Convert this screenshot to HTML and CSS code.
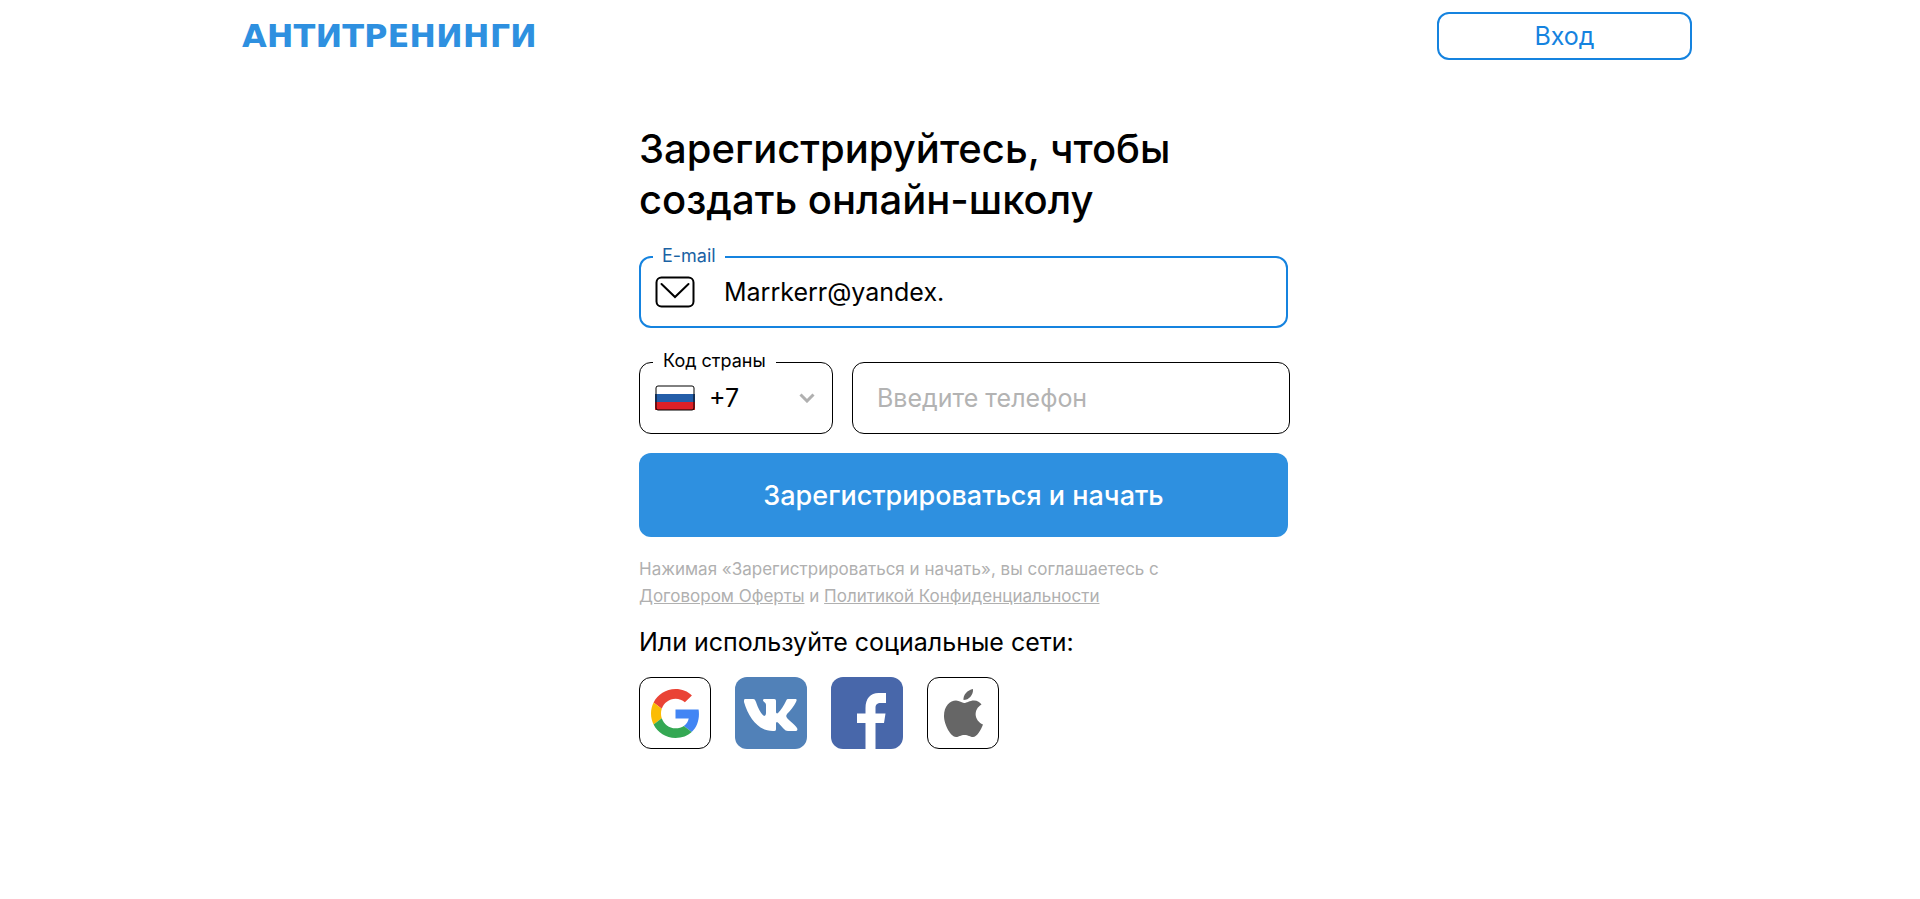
FILE: index.html
```
<!DOCTYPE html>
<html lang="ru">
<head>
  <meta charset="UTF-8" />
  <meta name="viewport" content="width=device-width, initial-scale=1.0" />
  <title>Антитренинги — регистрация</title>
  <link rel="stylesheet" href="styles.css">
</head>
<body>
  <header class="header">
    <a class="logo" href="#">АНТИТРЕНИНГИ</a>
    <button class="login-btn" type="button">Вход</button>
  </header>

  <main class="signup">
    <h1>Зарегистрируйтесь, чтобы создать онлайн-школу</h1>

    <form class="form">
      <div class="field field-active">
        <label for="email">E-mail</label>
        <svg class="icon-mail" viewBox="0 0 40 32" aria-hidden="true">
          <rect x="1.5" y="1.5" width="37" height="29" rx="5" />
          <path d="M6.500 8 20 21 33.500 8" />
        </svg>
        <input type="text" id="email" value="Marrkerr@yandex." />
      </div>

      <div class="phone-row">
        <div class="field field-code">
          <label for="code">Код страны</label>
          <svg class="icon-flag" viewBox="0 0 40 26" aria-hidden="true">
            <rect width="40" height="26" rx="2" fill="#fff" />
            <path fill="#245ea9" d="M0 9h40v8H0z" />
            <path fill="#de2027" d="M0 17h40v8H0z" />
            <rect class="flag-frame" x="1" y="1" width="38" height="24" rx="2" />
          </svg>
          <select id="code">
            <option>+7</option>
          </select>
          <svg class="icon-chevron" viewBox="0 0 16 10" aria-hidden="true">
            <path d="M1.500 1.500 8 8l6.500-6.500" />
          </svg>
        </div>
        <div class="field field-phone">
          <input type="tel" id="phone" placeholder="Введите телефон" aria-label="Телефон" />
        </div>
      </div>

      <button class="submit-btn" type="submit">Зарегистрироваться и начать</button>
    </form>

    <p class="terms">
      Нажимая «Зарегистрироваться и начать», вы соглашаетесь с
      <a href="#">Договором Оферты</a> и <a href="#">Политикой Конфиденциальности</a>
    </p>

    <h2>Или используйте социальные сети:</h2>

    <div class="socials">
      <a class="social" href="#" aria-label="Google">
        <svg viewBox="0 0 48 48" width="49" height="49">
          <path fill="#ea4335" d="M24 9.500c3.540 0 6.710 1.220 9.210 3.600l6.850-6.850C35.900 2.380 30.470 0 24 0 14.620 0 6.510 5.380 2.560 13.220l7.980 6.190C12.430 13.720 17.740 9.500 24 9.500z" />
          <path fill="#4285f4" d="M46.980 24.550c0-1.570-.15-3.090-.38-4.550H24v9.020h12.940c-.58 2.960-2.260 5.480-4.780 7.180l7.730 6c4.510-4.180 7.090-10.360 7.090-17.650z" />
          <path fill="#fbbc05" d="M10.530 28.590c-.48-1.450-.76-2.990-.76-4.590s.27-3.140.76-4.590l-7.980-6.190C.92 16.460 0 20.120 0 24s.92 7.540 2.560 10.780l7.970-6.190z" />
          <path fill="#34a853" d="M24 48c6.480 0 11.930-2.130 15.890-5.810l-7.730-6c-2.150 1.450-4.920 2.300-8.160 2.300-6.260 0-11.570-4.220-13.470-9.910l-7.980 6.190C6.510 42.620 14.620 48 24 48z" />
        </svg>
      </a>
      <a class="social social-vk" href="#" aria-label="ВКонтакте">
        <svg viewBox="0 0 72 72" width="72" height="72">
          <path fill="#fff" d="M10 22h8c2 0 2 1 3 3 2 6 5 12 8 14 1 0 2-1 2-3v-8c0-3-3-3-3-5 0-1 1-1 2-1h9c2 0 2 1 2 3v10c0 1 1 2 2 1 3-3 6-8 8-12 1-2 1-2 3-2h6c2 0 2 1 1 3-2 4-6 9-9 12-1 2-1 2 0 4 3 3 8 7 10 10 1 2 0 3-2 3h-7c-2 0-3-1-4-2-2-2-5-6-7-7-1 0-1 1-1 2v5c0 2-1 2-3 2C24 54 14 42 9 25c0-2 0-3 1-3z" />
        </svg>
      </a>
      <a class="social social-fb" href="#" aria-label="Facebook">
        <svg viewBox="0 0 72 72" width="72" height="72">
          <path fill="#fff" d="M34.500 72V46H26V36.500h8.500V31c0-9.500 5-15 13-15h7.500v10h-5c-4 0-5.500 1.500-5.500 5v5.500h10L53 46h-8.500v26z" />
        </svg>
      </a>
      <a class="social" href="#" aria-label="Apple">
        <svg viewBox="0 0 72 72" width="72" height="72">
          <path fill="#666" d="M46 12c.5 6-4 11-9.500 11C36 18 40.500 13 46 12zM37 26c3 0 5.500-2.500 10-2.500 3.500 0 6 2 7.500 4-8.500 5-7.500 16 1.500 20-2 5.500-6 12.500-10 12.500-3 0-4.500-2-8.500-2s-5.500 2-8.500 2c-5 0-12-12-12-21 0-10 6-15.500 12-15.500 3.500 0 6 2.500 8 2.500z" />
        </svg>
      </a>
    </div>
  </main>
</body>
</html>
```
FILE: styles.css
```
* {
  box-sizing: border-box;
}

body {
  font-family: Inter, "Open Sans", sans-serif;
  font-size: 25px;
  color: #000;
  background: #fff;
  margin: 0;
  padding-left: 7px;
}

.header {
  display: flex;
  justify-content: space-between;
  align-items: center;
  max-width: 1457px;
  margin: 0 auto;
  padding: 12px 0 12px 7px;
}

.logo {
  font-family: "DejaVu Sans", sans-serif;
  font-size: 32px;
  font-weight: bold;
  line-height: 36px;
  color: #2e90e0;
  text-decoration: none;
}

.login-btn {
  width: 255px;
  height: 48px;
  font: inherit;
  color: #1583df;
  background: #fff;
  border: 2px solid #1583df;
  border-radius: 12px;
  cursor: pointer;
}

.signup {
  max-width: 649px;
  margin: 0 auto;
  padding: 51px 0 40px;
}

h1 {
  font-size: 40px;
  font-weight: 500;
  line-height: 51px;
  margin: 0 0 31px;
}

.form {
  display: flex;
  flex-direction: column;
  gap: 19px;
}

.field {
  position: relative;
  display: flex;
  align-items: center;
  height: 72px;
  padding: 0 15px;
  border: 1px solid #000;
  border-radius: 12px;
}

.field label {
  position: absolute;
  top: -14px;
  left: 13px;
  padding: 0 10px;
  font-size: 18px;
  line-height: 24px;
  background: #fff;
}

.field input,
.field select {
  flex: 1;
  min-width: 0;
  height: 100%;
  padding: 0;
  font: inherit;
  color: #000;
  background: none;
  border: none;
  outline: none;
  appearance: none;
}

.field input::placeholder {
  color: #b3b3b3;
  opacity: 1;
}

.field-active {
  gap: 29px;
  padding: 0 14px;
  margin-bottom: 15px;
  border: 2px solid #1583df;
}

.field-active label {
  left: 12px;
  padding: 0 9px;
  color: #1a62a4;
}

.phone-row {
  display: flex;
  gap: 19px;
}

.field-code {
  flex: 0 0 194px;
  gap: 14px;
}

.field-phone {
  flex: 1;
  padding: 0 24px;
}

.icon-mail {
  width: 40px;
  height: 32px;
  fill: none;
  stroke: #000;
  stroke-width: 2;
  stroke-linecap: round;
}

.icon-flag {
  width: 40px;
  height: 26px;
}

.flag-frame {
  fill: none;
  stroke: #000;
  stroke-width: 1;
}

.icon-chevron {
  width: 16px;
  height: 10px;
  margin-right: 2px;
  fill: none;
  stroke: #b0b0b0;
  stroke-width: 3;
  pointer-events: none;
}

.submit-btn {
  height: 84px;
  font: inherit;
  font-size: 27px;
  font-weight: 500;
  color: #fff;
  background: #2e90e0;
  border: none;
  border-radius: 12px;
  cursor: pointer;
}

.terms {
  margin: 19px 0 17px;
  font-size: 17px;
  line-height: 27px;
  color: #b0b0b0;
  max-width: 560px;
}

.terms a {
  color: inherit;
}

h2 {
  font-size: 25px;
  font-weight: 400;
  line-height: 30px;
  margin: 0 0 20px;
}

.socials {
  display: flex;
  gap: 24px;
}

.social {
  display: flex;
  align-items: center;
  justify-content: center;
  width: 72px;
  height: 72px;
  border: 1px solid #000;
  border-radius: 12px;
}

.social svg {
  flex: none;
}

.social-vk {
  background: #5181b8;
  border: none;
}

.social-fb {
  background: #4867aa;
  border: none;
}
```
